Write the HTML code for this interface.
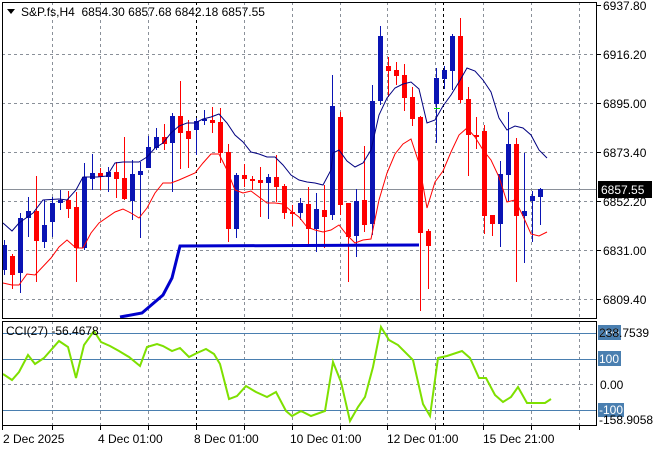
<!DOCTYPE html>
<html><head><meta charset="utf-8"><style>
html,body{margin:0;padding:0;background:#fff;width:660px;height:450px;overflow:hidden}
svg{display:block}
text{font-family:"Liberation Sans",sans-serif;font-size:12px;fill:#000}
</style></head><body>
<svg id="s" width="660" height="450" viewBox="0 0 660 450" xmlns="http://www.w3.org/2000/svg">
<rect width="660" height="450" fill="#fff"/>
<g id="grid" stroke="#8a9099" stroke-dasharray="3,3" stroke-width="1" fill="none">
<path d="M52.5 2V318M100.5 2V318M148.5 2V318M244.5 2V318M292.5 2V318M340.5 2V318M387.5 2V318M435.5 2V318M483.5 2V318M531.5 2V318M579.5 2V318"/>
<path d="M2 54.5H596M2 103.5H596M2 152.5H596M2 201.5H596M2 250.5H596M2 299.5H596"/>
<path d="M52.5 321V426M100.5 321V426M148.5 321V426M244.5 321V426M292.5 321V426M340.5 321V426M387.5 321V426M435.5 321V426M483.5 321V426M531.5 321V426M579.5 321V426"/>
<path d="M2 384.5H596"/>
</g>
<path d="M196.5 2V318M443.5 2V318M196.5 321V426M443.5 321V426" stroke="#000" stroke-dasharray="3,3" fill="none"/>
<path d="M2 189.5H596" stroke="#8a9099" stroke-width="1"/>
<g id="candles"></g>
<polyline fill="none" stroke="#0000cc" stroke-width="3" points="120,317 142,313 163,295 172,278 180,246 419,245"/>
<polyline fill="none" stroke="#000080" stroke-width="1" points="3,223 12,231 19,223 33,213 43,200 59,199 67,200 76,190 83,177 97,177 107,176 115,163 123,162 139,162 147,157 155,148 163,143 171,133 179,126 187,123 195,123 203,119 211,117 219,114 227,123 235,135 243,142 251,152 259,154 267,157 275,157 283,165 291,175 299,180 307,182 315,183 323,185 331,170 333,153 339,150 347,161 355,167 363,163 371,150 379,115 387,98 395,88 403,84 411,82 419,89 427,123 435,120 443,106 451,95 459,82 467,68 475,71 483,80 491,92 499,118 507,130 515,126 523,128 531,135 539,150 547,158"/>
<polyline fill="none" stroke="#ff0000" stroke-width="1" points="3,283 12,285 19,285 27,274 35,275 51,258 59,247 67,240 76,248 83,248 91,233 99,223 115,212 123,209 131,213 139,218 147,208 155,193 163,183 171,183 179,180 195,173 203,163 211,154 219,154 227,170 235,190 243,193 251,191 259,197 267,203 275,203 283,204 291,211 299,217 307,227 315,230 323,232 331,230 339,225 347,235 355,243 363,240 371,239 379,200 387,173 395,154 403,144 411,139 419,163 427,208 435,182 443,171 451,152 459,135 467,128 475,137 483,150 491,160 499,177 507,202 515,200 523,216 531,234 539,236 547,232"/>
<path d="M434 108.5H440" stroke="#00dd00"/>
<rect x="2.5" y="2.5" width="594" height="316" fill="none" stroke="#000"/>
<!-- CCI -->
<path d="M2 333.5H596M2 359.5H596M2 410.5H596" stroke="#4a7fb0" stroke-width="1"/>
<polyline fill="none" stroke="#7ee000" stroke-width="2" points="3,374 12,380 19,372 28,355 35,364 44,358 59,341 68,347 76,378 84,345 94,331 101,342 110,346 119,351 129,357 140,366 147,347 157,344 163,346 172,351 180,348 189,357 197,353 206,349 214,354 220,364 229,399 237,396 246,386 256,392 267,397 276,392 286,411 292,416 301,411 311,416 325,411 333,362 341,382 350,421 358,407 365,397 373,367 381,327 389,340 398,345 413,360 423,404 430,416 438,358 447,356 462,351 470,358 479,378 486,378 495,395 503,402 511,397 518,387 527,403 545,403 551,399"/>
<rect x="2.5" y="321.5" width="594" height="104" fill="none" stroke="#000"/>
<!-- price axis -->
<g stroke="#000"><path d="M597 5.5h4M597 54.5h4M597 103.5h4M597 152.5h4M597 201.5h4M597 250.5h4M597 299.5h4"/></g>
<text x="603" y="10">6937.80</text>
<text x="603" y="59">6916.20</text>
<text x="603" y="108">6895.00</text>
<text x="603" y="157">6873.40</text>
<text x="603" y="206">6852.20</text>
<text x="603" y="255">6831.00</text>
<text x="603" y="304">6809.40</text>
<rect x="598" y="181" width="54" height="17" fill="#000"/>
<text x="601" y="194" style="fill:#fff">6857.55</text>
<!-- CCI axis -->
<rect x="598" y="325" width="23" height="15" fill="#4a7fb0"/>
<text x="599" y="337" style="fill:#fff">200</text>
<text x="599" y="337">238.7539</text>
<rect x="598" y="351" width="23" height="15" fill="#4a7fb0"/>
<text x="599" y="363" style="fill:#fff">100</text>
<text x="600" y="389">0.00</text>
<rect x="598" y="403" width="26" height="14" fill="#4a7fb0"/>
<text x="599" y="414" style="fill:#fff">-100</text>
<text x="599" y="424">-158.9058</text>
<!-- labels -->
<path d="M7 9h8l-4 5z" fill="#000"/>
<text x="21" y="16">S&amp;P.fs,H4&#160;&#160;6854.30 6857.68 6842.18 6857.55</text>
<text x="6" y="335">CCI(27) -56.4678</text>
<g stroke="#000"><path d="M2.5 426v4M52.5 426v4M100.5 426v4M148.5 426v4M196.5 426v4M244.5 426v4M292.5 426v4M340.5 426v4M387.5 426v4M435.5 426v4M483.5 426v4M531.5 426v4M579.5 426v4"/></g>
<text x="3" y="443">2 Dec 2025</text>
<text x="98" y="443">4 Dec 01:00</text>
<text x="194" y="443">8 Dec 01:00</text>
<text x="290" y="443">10 Dec 01:00</text>
<text x="387" y="443">12 Dec 01:00</text>
<text x="483" y="443">15 Dec 21:00</text>
</svg>
<script>
var c=[
['b',245,270,240,275],['r',256,275,254,289],['b',218,273,213,293],['b',211,218,197,237],['r',211,241,176,282],
['b',225,242,200,248],['b',203,222,197,237],['b',200,203,190,210],['r',200,209,191,218],['r',207,248,192,282],
['b',177,248,163,250],['b',173,179,154,190],['r',173,177,168,190],['b',172,177,167,192],['r',172,179,162,198],
['r',178,199,137,200],['b',174,201,160,220],['b',171,175,162,238],['b',147,168,136,168],['b',137,148,128,150],
['r',137,144,124,150],['b',116,143,113,192],['r',116,133,81,169],['r',131,139,120,168],['b',121,130,118,155],
['b',119,121,110,125],['r',120,123,107,133],['r',122,153,108,163],['r',152,229,144,242],['b',175,229,173,238],
['r',175,179,164,187],['r',179,181,176,190],['r',180,183,167,217],['b',177,183,174,219],['r',177,187,155,202],
['r',186,213,184,219],['r',212,213,205,226],['b',203,213,198,220],['r',204,229,187,247],['b',209,229,193,252],
['r',210,217,185,248],['b',106,215,75,220],['r',117,205,112,215],['r',203,237,203,282],['b',201,236,189,257],
['r',200,225,146,232],['b',101,224,85,235],['b',36,101,26,105],['r',66,71,57,97],['r',70,76,62,85],
['r',75,98,64,111],['r',97,119,87,126],['r',117,233,116,311],['r',231,246,229,289],['b',78,104,68,143],
['b',70,79,66,89],['b',36,71,34,90],['r',36,100,18,103],['r',99,135,87,176],['r',135,137,117,149],
['r',131,216,125,234],['r',215,224,215,236],['b',174,224,161,247],['b',144,175,112,201],['r',144,216,138,282],
['b',211,216,153,263],['b',196,201,191,242],['b',189,197,188,225]];
var g=document.getElementById('candles'),ns='http://www.w3.org/2000/svg',h='';
c.forEach(function(d,i){var x=4+8*i;var col=d[0]=='b'?'#0a14b4':'#ff0000';
h+='<path d="M'+(x+0.5)+' '+d[3]+'V'+d[4]+'" stroke="'+col+'"/>';
var t=d[1],b=Math.max(d[2],d[1]+2);h+='<rect x="'+(x-2)+'" y="'+t+'" width="5" height="'+(b-t)+'" fill="'+col+'"/>';});
g.innerHTML=h;
</script>
</body></html>
